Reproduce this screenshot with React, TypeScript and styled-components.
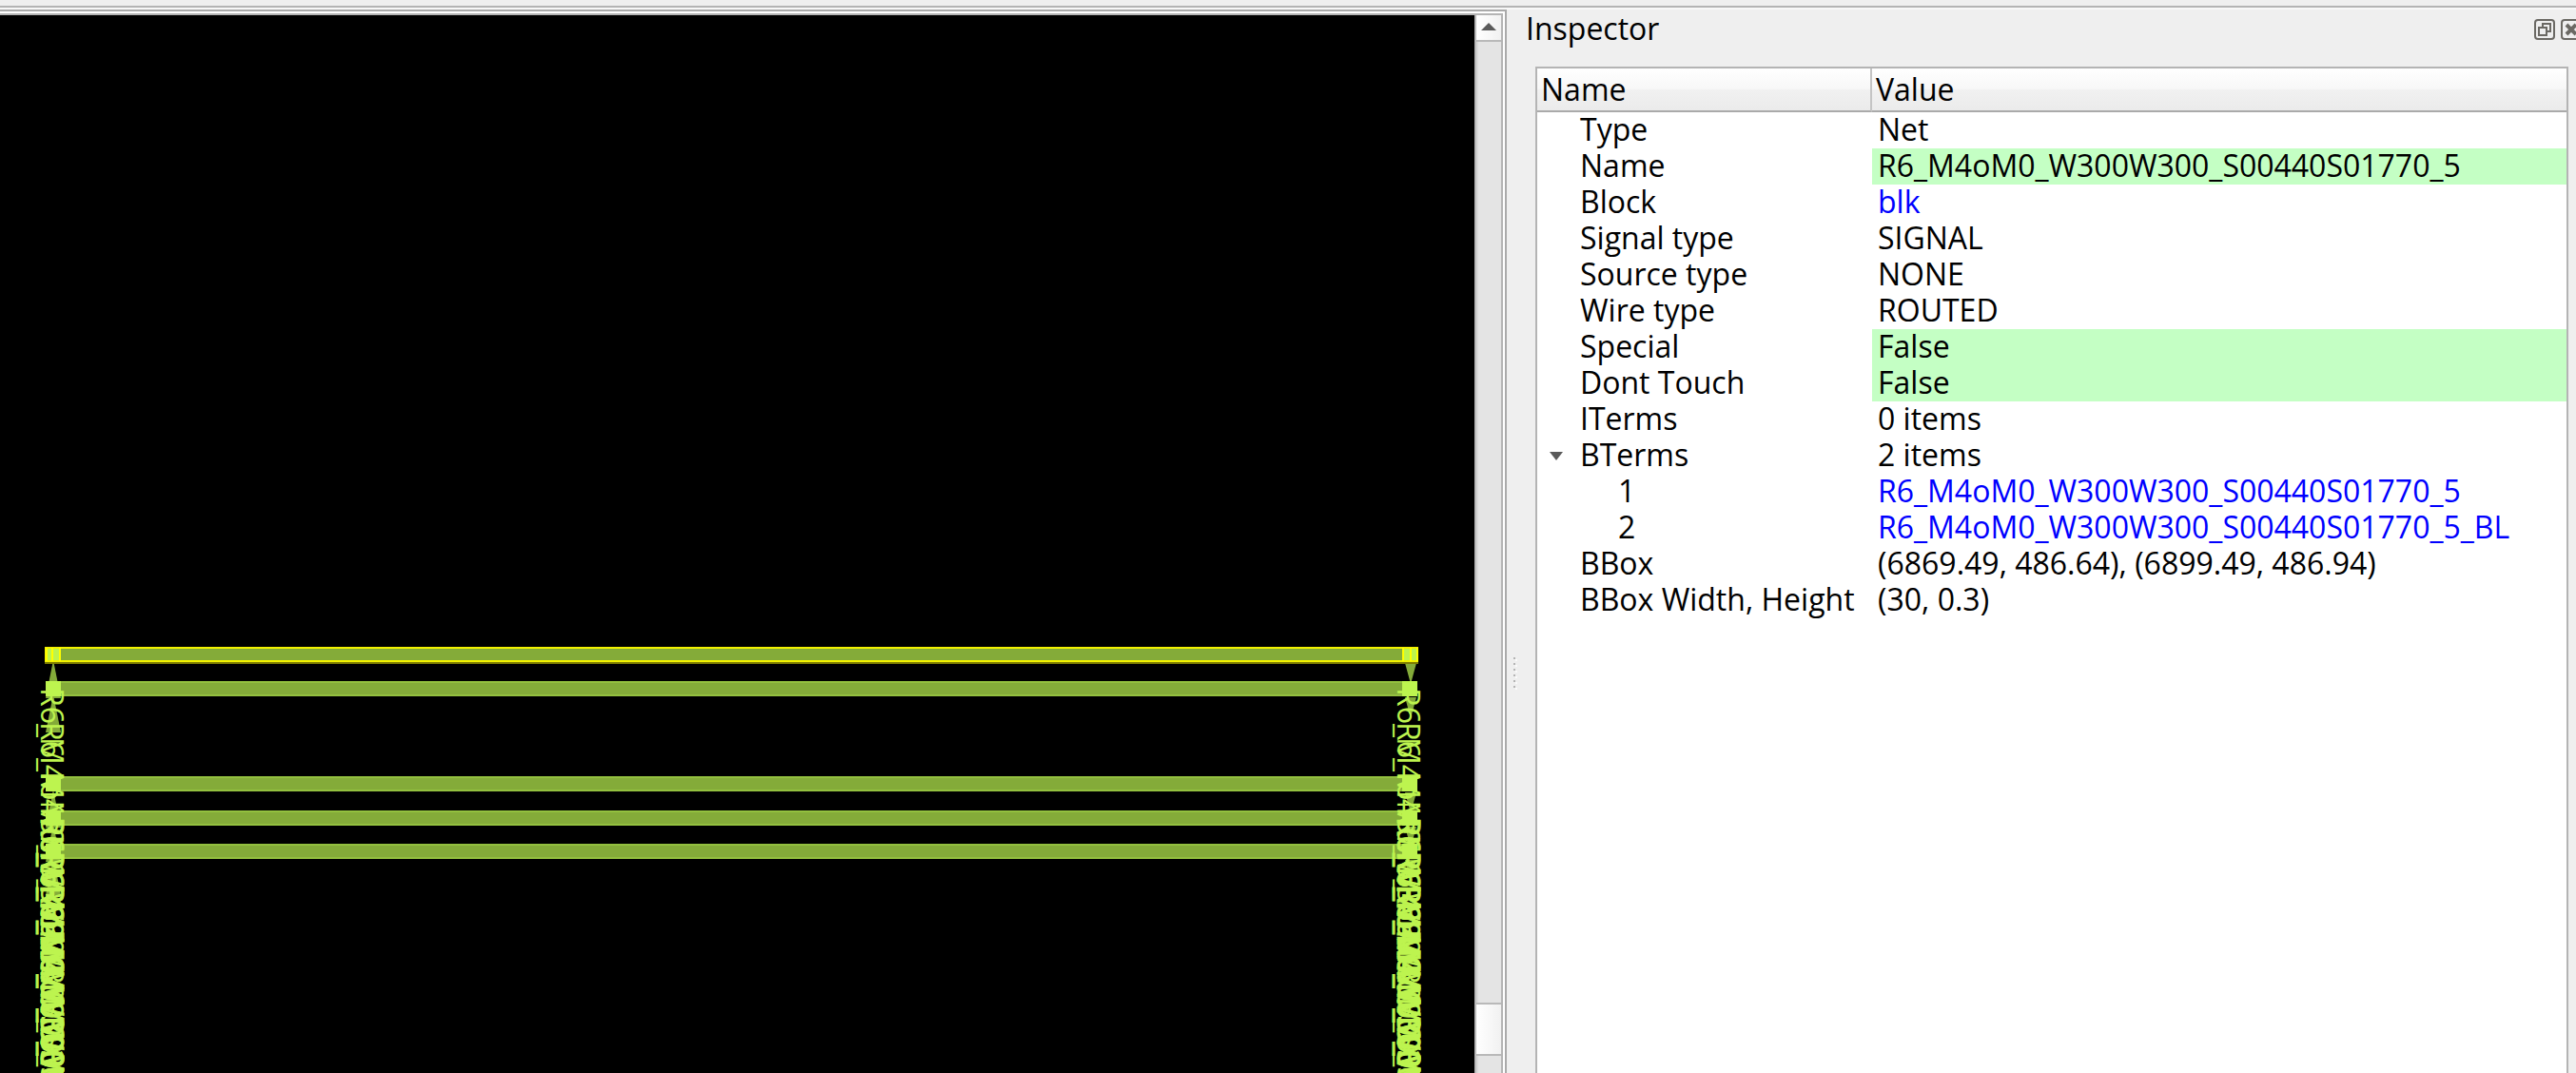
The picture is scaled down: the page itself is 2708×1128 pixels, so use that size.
import React, { useState } from "react";
import styled, { createGlobalStyle } from "styled-components";

const GlobalStyle = createGlobalStyle`
  * { box-sizing: border-box; }
  html, body, #root { height: 100%; }
  body {
    margin: 0;
    overflow: hidden;
    background: #efefef;
    color: #000;
    font-family: "Open Sans", "Noto Sans", sans-serif;
    font-size: 32px;
    line-height: 36px;
  }
`;

const Window = styled.div`
  height: 100vh;
  display: flex;
  flex-direction: column;
`;

const ToolbarEdge = styled.div`
  flex: none;
  height: 10px;
  border-bottom: 2px solid #f8f8f8;
  box-shadow: inset 0 -2px #b4b4b4;
`;

const Workspace = styled.div`
  flex: 1;
  min-height: 0;
  display: grid;
  grid-template-columns: minmax(0, 1584fr) 16px minmax(0, 1108fr);
`;

const ViewerFrame = styled.main`
  min-height: 0;
  border-top: 2px solid #aaaaaa;
  border-right: 2px solid #aaaaaa;
  background: #ffffff;
  padding: 2px 2px 0 0;
`;

const ViewerBody = styled.div`
  height: 100%;
  display: flex;
  border-top: 2px solid #b4b4b4;
  border-right: 2px solid #b4b4b4;
`;

const Canvas = styled.div`
  flex: 1;
  min-width: 0;
  overflow: hidden;
  background: #000;
`;

const Drawing = styled.svg`
  display: block;
  width: 100%;
  height: 100%;
`;

const ScrollBar = styled.div`
  flex: none;
  width: 28px;
  display: flex;
  flex-direction: column;
  border-left: 2px solid #b9b9b9;
  background: linear-gradient(to right, #d9d9d9 2px, #e4e4e4 2px);
`;

const ScrollButton = styled.button`
  flex: none;
  height: 28px;
  padding: 0 0 2px;
  display: flex;
  align-items: center;
  justify-content: center;
  border: 0;
  border-bottom: 2px solid #b9b9b9;
  background: linear-gradient(to right, #ffffff, #f1f1f1);
`;

const TrackSpace = styled.div<{ $grow: number }>`
  flex: ${(p) => p.$grow} 1 0;
`;

const Thumb = styled.div`
  flex: none;
  height: 56px;
  border-top: 2px solid #b9b9b9;
  border-bottom: 2px solid #b9b9b9;
  background: linear-gradient(to right, #ffffff, #f1f1f1);
`;

const Splitter = styled.div`
  display: flex;
  flex-direction: column;
  align-items: center;
  justify-content: center;
  gap: 4px;
  padding-top: 276px;
`;

const Grip = styled.span`
  width: 2px;
  height: 2px;
  background: #b4b4b4;
  box-shadow: 2px 2px #fafafa;
`;

const Dock = styled.aside`
  min-height: 0;
  display: flex;
  flex-direction: column;
  overflow: hidden;
`;

const DockTitle = styled.header`
  flex: none;
  height: 60px;
  display: flex;
  align-items: flex-start;
  gap: 6px;
  margin-right: -6px;
  padding-left: 4px;
`;

const Title = styled.h1`
  flex: 1;
  margin: 0;
  font-size: 32px;
  font-weight: 400;
  line-height: 40px;
`;

const TitleButton = styled.button`
  flex: none;
  width: 22px;
  height: 22px;
  margin-top: 10px;
  padding: 0;
  border: 0;
  background: none;
`;

const TreeFrame = styled.div`
  flex: 1;
  min-height: 0;
  margin: 0 8px 0 14px;
  border: 2px solid #b4b4b4;
  border-bottom: 0;
  background: #fff;
  overflow: hidden;
`;

const Tree = styled.table`
  width: 100%;
  border-collapse: separate;
  border-spacing: 0;
  table-layout: fixed;
`;

const NameCol = styled.col`
  width: 352px;
`;

const HeadCell = styled.th`
  height: 46px;
  padding: 0 4px;
  border-bottom: 2px solid #aaaaaa;
  background: linear-gradient(#ffffff, #f7f7f7 50%, #f1f1f1 50%, #ebebeb);
  font-weight: 400;
  text-align: left;

  &:first-child {
    border-right: 2px solid #c4c4c4;
  }
`;

const Row = styled.tr`
  height: 38px;
`;

const NameCell = styled.td<{ $depth: number }>`
  padding: 0 0 2px ${(p) => 5 + p.$depth * 40}px;
  white-space: nowrap;
`;

const ValueCell = styled.td<{ $editable?: boolean }>`
  padding: 0 0 2px 6px;
  white-space: nowrap;
  background: ${(p) => (p.$editable ? "#c4ffc4" : "transparent")};
`;

const NameLine = styled.div`
  display: flex;
  align-items: center;
`;

const Expander = styled.button`
  width: 14px;
  height: 36px;
  margin: 0 18px 0 8px;
  padding: 2px 0 0;
  border: 0;
  background: none;
  display: flex;
  align-items: center;
`;

const ObjectLink = styled.a`
  color: #0000ff;
  text-decoration: none;
`;

type Item = {
  name: string;
  value: string;
  depth?: number;
  editable?: boolean;
  link?: boolean;
  expandable?: boolean;
};

const NET = "R6_M4oM0_W300W300_S00440S01770_5";

const ITEMS: Item[] = [
  { name: "Type", value: "Net" },
  { name: "Name", value: NET, editable: true },
  { name: "Block", value: "blk", link: true },
  { name: "Signal type", value: "SIGNAL" },
  { name: "Source type", value: "NONE" },
  { name: "Wire type", value: "ROUTED" },
  { name: "Special", value: "False", editable: true },
  { name: "Dont Touch", value: "False", editable: true },
  { name: "ITerms", value: "0 items" },
  { name: "BTerms", value: "2 items", expandable: true },
  { name: "1", value: NET, depth: 2, link: true },
  { name: "2", value: NET + "_BL", depth: 2, link: true },
  { name: "BBox", value: "(6869.49, 486.64), (6899.49, 486.94)" },
  { name: "BBox Width, Height", value: "(30, 0.3)" },
];

const WIRES = [664, 700, 800, 836, 871];

function Pins({ x, flip }: { x: number; flip?: boolean }) {
  return (
    <g>
      {WIRES.map((y) => (
        <path
          key={y}
          d={flip ? `M${x + 3} ${y + 17} h12 l-6 22z` : `M${x + 8} ${y + 14} l8 40 h-16z`}
          fill="#84ab39"
        />
      ))}
      {WIRES.map((y) => (
        <rect key={y} x={x} y={y} width="16" height="16" fill="#bdf44f" />
      ))}
      {WIRES.map((y, i) => (
        <text
          key={y}
          transform={`translate(${x - 5} ${y + 43}) rotate(90)`}
          fontFamily="Open Sans, Noto Sans, sans-serif"
          fontSize="32"
          fill="#bdf44f"
          stroke={i > 1 ? "#bdf44f" : "none"}
          strokeWidth="1"
        >
          {NET}
        </text>
      ))}
    </g>
  );
}

function Layout() {
  return (
    <Drawing viewBox="0 0 1550 1112" preserveAspectRatio="xMinYMin slice" aria-label="Layout">
      {WIRES.map((y) => (
        <g key={y}>
          <rect x="48" y={y} width="1442" height="16" fill="#93c03f" />
          <rect x="48" y={y + 2} width="1442" height="12" fill="#84ab39" />
        </g>
      ))}
      <Pins x={48} />
      <Pins x={1474} flip />
      <rect x="48" y="665" width="1442" height="14" fill="none" stroke="#f2f200" strokeWidth="2" />
      <path d="M47 681h1444" stroke="#7d7d00" strokeWidth="2" />
      <path
        d="M49 665v14M55 665v14M63 665v14M1475 665v14M1483 665v14M1490 665v14"
        stroke="#ffff00"
        strokeWidth="2"
      />
    </Drawing>
  );
}

export default function App() {
  const [open, setOpen] = useState(true);
  const rows = ITEMS.filter((i) => open || i.depth !== 2);

  return (
    <>
      <GlobalStyle />
      <Window>
        <ToolbarEdge />
        <Workspace>
          <ViewerFrame>
            <ViewerBody>
              <Canvas>
                <Layout />
              </Canvas>
              <ScrollBar>
                <ScrollButton aria-label="Scroll up">
                  <svg width="16" height="8" viewBox="0 0 16 8">
                    <path d="M8 0l8 8H0z" fill="#5a5a5a" />
                  </svg>
                </ScrollButton>
                <TrackSpace $grow={1010} />
                <Thumb />
                <TrackSpace $grow={18} />
              </ScrollBar>
            </ViewerBody>
          </ViewerFrame>
          <Splitter>
            {[0, 1, 2, 3, 4, 5].map((i) => (
              <Grip key={i} />
            ))}
          </Splitter>
          <Dock>
            <DockTitle>
              <Title>Inspector</Title>
              <TitleButton aria-label="Float">
                <svg width="22" height="22" viewBox="0 0 22 22" fill="none" stroke="#6b6964" strokeWidth="2">
                  <rect x="1" y="1" width="20" height="20" rx="3" />
                  <path d="M5 9h8v8H5zM9 8V5h8v8h-3" />
                </svg>
              </TitleButton>
              <TitleButton aria-label="Close">
                <svg width="22" height="22" viewBox="0 0 22 22" fill="none" stroke="#6b6964" strokeWidth="2">
                  <rect x="1" y="1" width="20" height="20" rx="3" />
                  <path d="M6 6l10 10M16 6L6 16" strokeWidth="4" />
                </svg>
              </TitleButton>
            </DockTitle>
            <TreeFrame>
              <Tree>
                <colgroup>
                  <NameCol />
                  <col />
                </colgroup>
                <thead>
                  <tr>
                    <HeadCell scope="col">Name</HeadCell>
                    <HeadCell scope="col">Value</HeadCell>
                  </tr>
                </thead>
                <tbody>
                  {rows.map((item) => (
                    <Row key={item.name}>
                      <NameCell $depth={item.expandable ? 0 : item.depth ?? 1}>
                        <NameLine>
                          {item.expandable && (
                            <Expander aria-label="Toggle BTerms" aria-expanded={open} onClick={() => setOpen(!open)}>
                              <svg width="14" height="9" viewBox="0 0 14 9">
                                <path d="M0 0h14L7 9z" fill="#5a5a5a" />
                              </svg>
                            </Expander>
                          )}
                          {item.name}
                        </NameLine>
                      </NameCell>
                      <ValueCell $editable={item.editable}>
                        {item.link ? <ObjectLink href="#">{item.value}</ObjectLink> : item.value}
                      </ValueCell>
                    </Row>
                  ))}
                </tbody>
              </Tree>
            </TreeFrame>
          </Dock>
        </Workspace>
      </Window>
    </>
  );
}
